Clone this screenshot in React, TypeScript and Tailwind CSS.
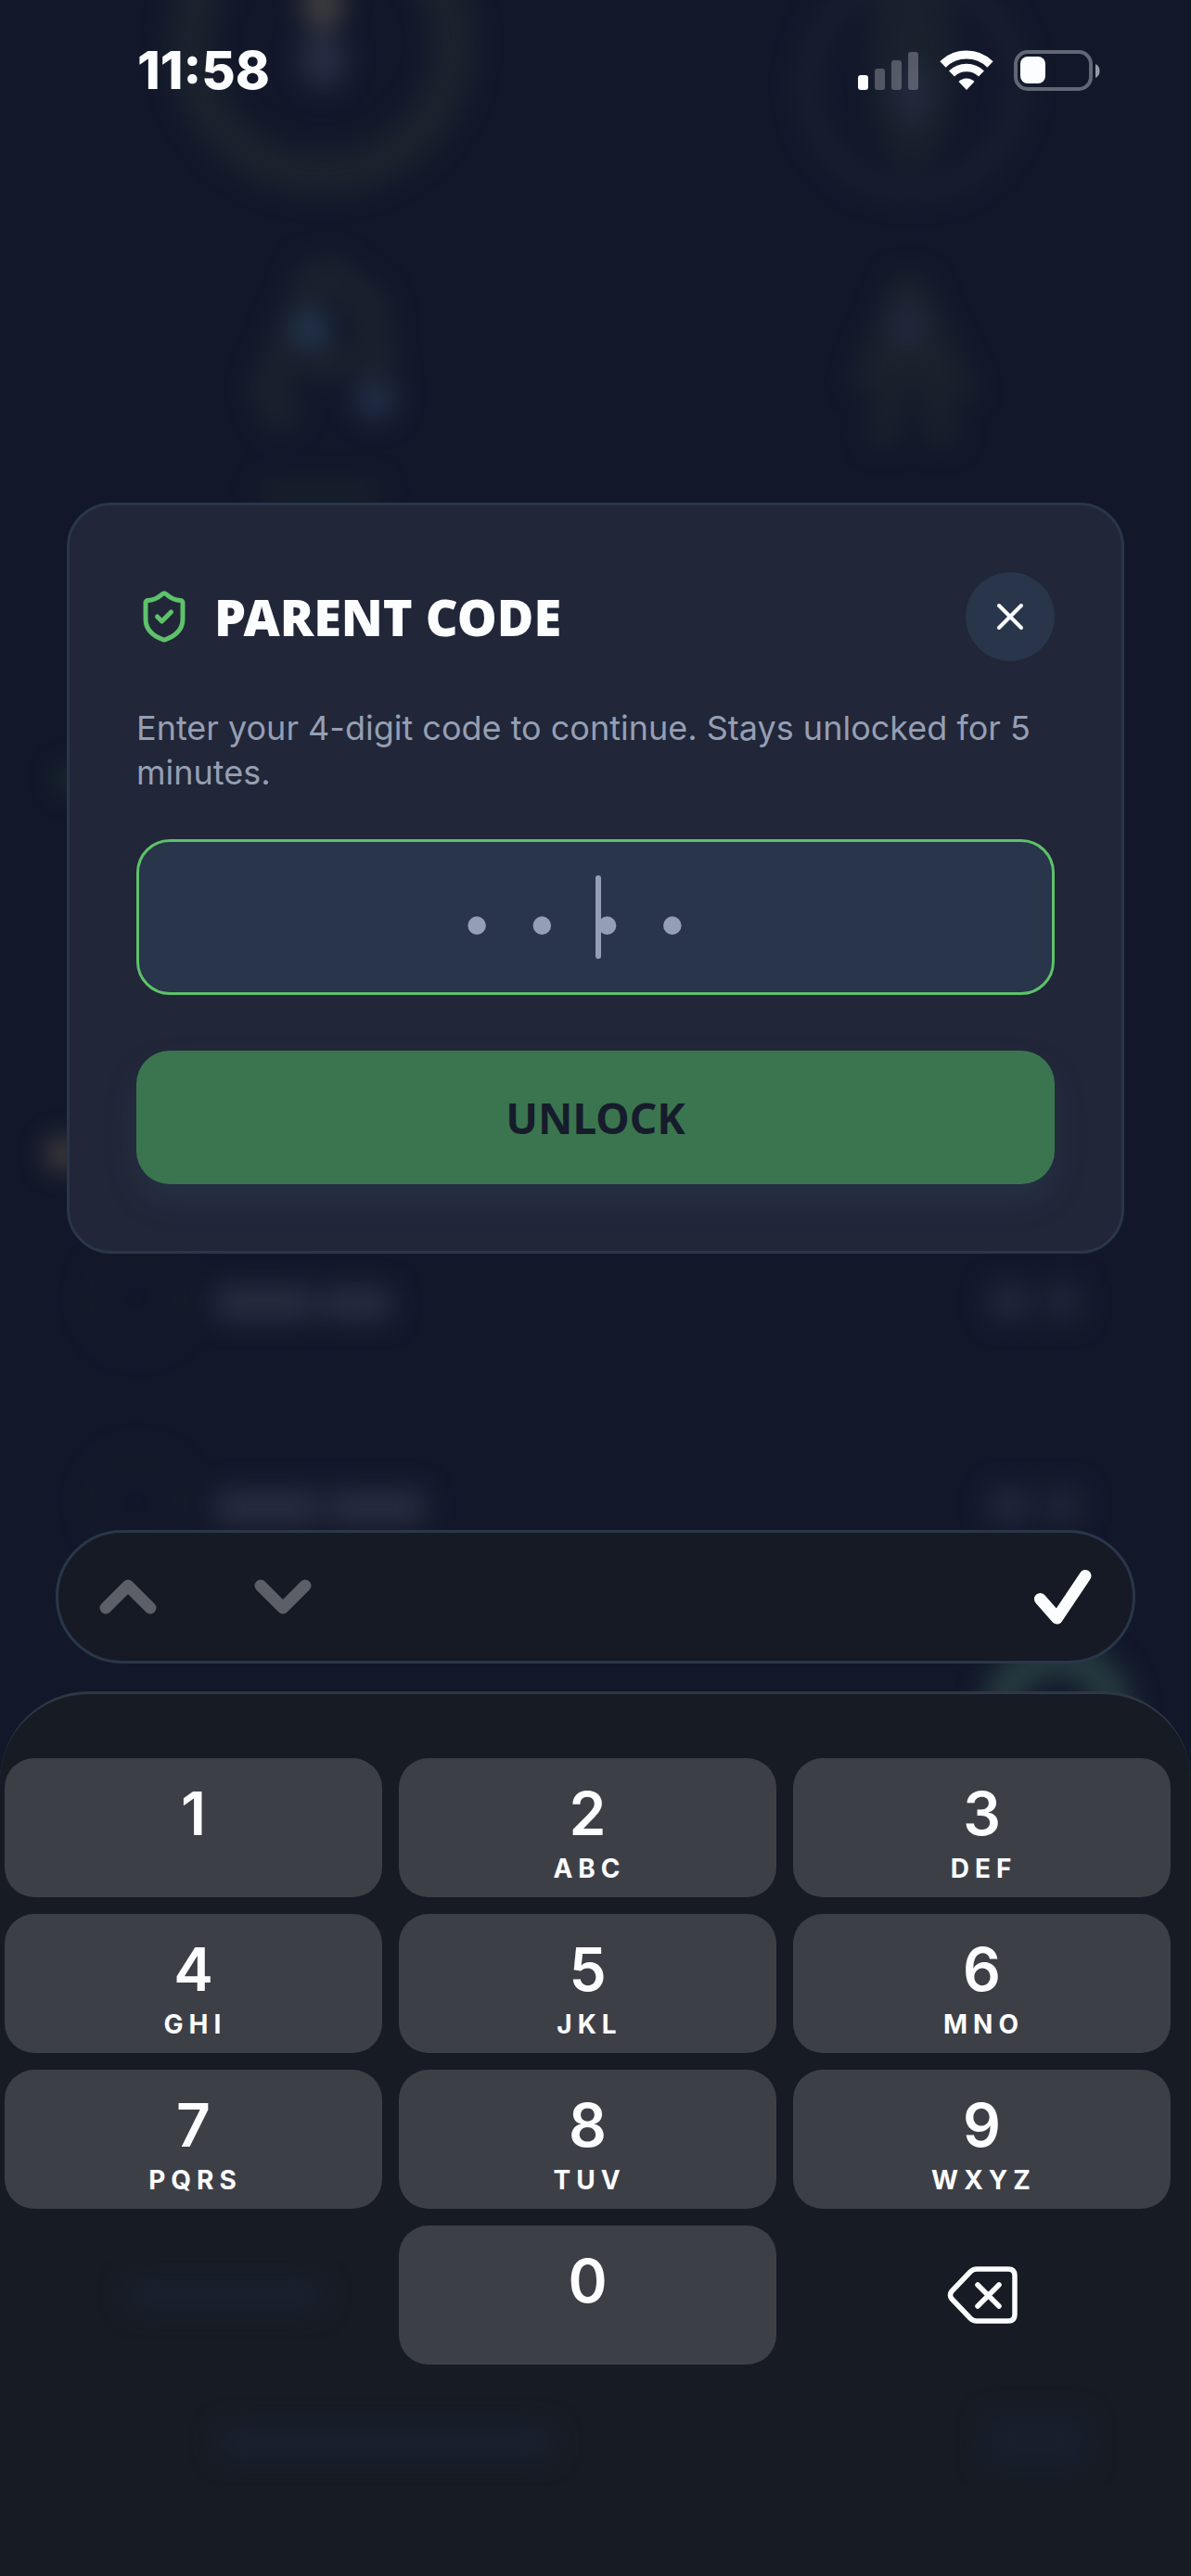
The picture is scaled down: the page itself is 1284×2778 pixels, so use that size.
import React, { useState } from 'react';
import { ShieldCheck, X } from 'lucide-react';

const keys = [
  { digit: '1', letters: '' },
  { digit: '2', letters: 'ABC' },
  { digit: '3', letters: 'DEF' },
  { digit: '4', letters: 'GHI' },
  { digit: '5', letters: 'JKL' },
  { digit: '6', letters: 'MNO' },
  { digit: '7', letters: 'PQRS' },
  { digit: '8', letters: 'TUV' },
  { digit: '9', letters: 'WXYZ' },
];

// Blurred remains of the screen under the dialog
const Backdrop: React.FC = () => (
  <div className="absolute inset-0 overflow-hidden" aria-hidden="true">
    <svg className="absolute inset-x-0 top-0 w-full" viewBox="0 0 1284 1900" fill="none">
      <defs>
        <filter id="soft" x="-10%" y="-10%" width="120%" height="120%" colorInterpolationFilters="sRGB">
          <feGaussianBlur stdDeviation="14" />
        </filter>
      </defs>
      <g filter="url(#soft)">
        <circle cx="347" cy="46" r="142" stroke="#1c232d" strokeWidth="44" />
        <ellipse cx="348" cy="4" rx="22" ry="28" fill="#403f40" />
        <ellipse cx="348" cy="64" rx="26" ry="32" fill="#262c42" />
        <circle cx="984" cy="92" r="114" stroke="#1a2132" strokeWidth="18" />
        <ellipse cx="984" cy="70" rx="44" ry="110" fill="#1a212d" />
        <ellipse cx="984" cy="100" rx="20" ry="30" fill="#222a3f" />
        <path d="M345 285 L290 420 L310 460 M345 285 L400 330 L410 440 M330 390 H380" stroke="#1b222e" strokeWidth="36" />
        <circle cx="335" cy="355" r="22" fill="#23334c" />
        <circle cx="404" cy="432" r="22" fill="#222e46" />
        <path d="M980 300 L930 420 M980 300 L1040 430 M980 340 L950 480 M980 340 L1020 480" stroke="#1b222c" strokeWidth="28" />
        <ellipse cx="978" cy="350" rx="20" ry="26" fill="#21283e" />
        <rect x="280" y="520" width="130" height="20" fill="#1a212c" />
        <circle cx="76" cy="840" r="14" fill="#1b2f30" />
        <circle cx="68" cy="1244" r="18" fill="#46413f" />
        <circle cx="148" cy="1400" r="48" stroke="#171d2a" strokeWidth="12" />
        <rect x="232" y="1386" width="106" height="38" fill="#272c3f" />
        <rect x="346" y="1388" width="76" height="36" fill="#272c3f" />
        <rect x="1066" y="1384" width="44" height="40" fill="#21273a" />
        <rect x="1126" y="1384" width="40" height="40" fill="#1f2537" />
        <circle cx="148" cy="1620" r="48" stroke="#171d2a" strokeWidth="12" />
        <rect x="232" y="1606" width="112" height="38" fill="#272c3f" />
        <rect x="354" y="1606" width="104" height="38" fill="#272c3f" />
        <rect x="1066" y="1604" width="44" height="40" fill="#21273a" />
        <rect x="1126" y="1604" width="40" height="40" fill="#1f2537" />
        <circle cx="1140" cy="1850" r="62" stroke="#263a3f" strokeWidth="40" />
      </g>
    </svg>
  </div>
);

const StatusBar: React.FC = () => (
  <header className="relative flex h-[152px] items-center justify-between pl-[148px] pr-[96px]">
    <span className="text-[56px] font-extrabold leading-[60px]">11:58</span>
    <div className="flex items-center gap-[22px]">
      <svg width="66" height="44" viewBox="0 0 66 44" fill="#fcfdff" role="img" aria-label="Signal">
        <rect x="0" y="27" width="11" height="16" rx="3" />
        <rect x="18" y="20" width="11" height="23" rx="3" opacity="0.26" />
        <rect x="36" y="11" width="11" height="32" rx="3" opacity="0.26" />
        <rect x="54" y="2" width="11" height="41" rx="3" opacity="0.26" />
      </svg>
      <svg width="58" height="44" viewBox="0 0 58 44" fill="none" stroke="#fcfdff" role="img" aria-label="Wi-Fi">
        <path d="M3.5 15.5 A36.5 36.5 0 0 1 54.5 15.5" strokeWidth="9" />
        <path d="M13 25.5 A23 23 0 0 1 45 25.5" strokeWidth="8.5" />
        <path d="M29 43 L20.5 34 A12 12 0 0 1 37.5 34 Z" fill="#fcfdff" stroke="none" />
      </svg>
      <svg width="95" height="44" viewBox="0 0 95 44" fill="none" role="img" aria-label="Battery">
        <rect x="2" y="2" width="81" height="40" rx="13" stroke="#626775" strokeWidth="4" />
        <rect x="7" y="7" width="27" height="29" rx="8" fill="#fcfdff" />
        <path d="M88 15 C94 17 94 28 88 30 Z" fill="#959aa8" />
      </svg>
    </div>
  </header>
);

export default function App() {
  const [code, setCode] = useState('');

  const press = (digit: string) => setCode((prev) => (prev + digit).slice(0, 4));

  return (
    <div className="relative flex min-h-screen flex-col bg-[#12182a] font-[Inter,sans-serif] text-[#fcfdff]">
      <Backdrop />
      <StatusBar />

      <main className="relative flex-1 px-[72px] pt-[390px]">
        <section
          role="dialog"
          aria-labelledby="parent-code-title"
          className="rounded-[48px] border-[3px] border-[#2a364a] bg-[#212638] p-[72px]"
        >
          <div className="flex items-center justify-between">
            <div className="flex items-center gap-6">
              <ShieldCheck size={60} color="#5ec269" />
              <h1 id="parent-code-title" className="font-['Noto_Sans',sans-serif] text-[54px] font-black leading-[60px]">
                PARENT CODE
              </h1>
            </div>
            <button aria-label="Close" className="flex size-24 items-center justify-center rounded-full bg-[#28354a]">
              <X size={48} />
            </button>
          </div>

          <label htmlFor="code" className="mt-12 block text-[36px] leading-[48px] text-[#959fb4]">
            Enter your 4-digit code to continue. Stays unlocked for 5 minutes.
          </label>

          <div className="relative mt-12">
            <input
              id="code"
              type="password"
              inputMode="numeric"
              maxLength={4}
              placeholder="••••"
              value={code}
              onChange={(e) => setCode(e.target.value)}
              className="block h-[168px] w-full rounded-[36px] border-[3px] border-[#5ec269] bg-[#28354a] pt-4 text-center font-['Liberation_Sans',sans-serif] text-[72px] tracking-[45px] caret-transparent outline-none placeholder:text-[#959fb4]"
            />
            {!code && (
              <span className="absolute left-1/2 top-1/2 h-[90px] w-[6px] -translate-y-1/2 rounded-full bg-[#959fb4]" />
            )}
          </div>

          <button className="mt-[60px] block h-[144px] w-full rounded-[36px] bg-[#3b754f] font-['Noto_Sans',sans-serif] text-[46px] font-bold text-[#161c2b] shadow-[0_18px_36px_rgba(59,100,120,0.2)]">
            UNLOCK
          </button>
        </section>
      </main>

      <div className="relative mx-[60px] mb-[30px] flex h-[144px] items-center justify-between rounded-[72px] border-[3px] border-[#2a364a] bg-[#161a24] px-11">
        <div className="flex gap-[105px]">
          <button aria-label="Previous field">
            <svg width="62" height="38" viewBox="0 0 62 38" fill="none" stroke="#5c5f68" strokeWidth="13" strokeLinecap="round" strokeLinejoin="round">
              <path d="M7 31 L31 7 L55 31" />
            </svg>
          </button>
          <button aria-label="Next field">
            <svg width="62" height="38" viewBox="0 0 62 38" fill="none" stroke="#5c5f68" strokeWidth="13" strokeLinecap="round" strokeLinejoin="round">
              <path d="M7 7 L31 31 L55 7" />
            </svg>
          </button>
        </div>
        <button aria-label="Done">
          <svg width="62" height="60" viewBox="0 0 62 60" fill="none" stroke="#fcfdff" strokeWidth="13" strokeLinecap="round" strokeLinejoin="round">
            <path d="M6.5 32.5 L24.5 53 L55 7.5" />
          </svg>
        </button>
      </div>

      <div className="relative rounded-t-[96px] border-t-[3px] border-[#2f3744] bg-[#171b24] pb-[228px] pl-[5px] pr-[22px] pt-[69px]">
        <svg className="absolute inset-x-0 bottom-0 w-full" viewBox="0 0 1284 378" fill="#1a2130" aria-hidden="true">
          <g filter="url(#soft)">
            <rect x="138" y="58" width="208" height="32" />
            <rect x="236" y="218" width="360" height="32" />
            <rect x="1062" y="206" width="110" height="54" fill="#181f2e" />
          </g>
        </svg>
        <div className="relative grid grid-cols-3 gap-[18px]">
          {keys.map((key) => (
            <button
              key={key.digit}
              onClick={() => press(key.digit)}
              className="flex h-[150px] flex-col items-center rounded-[32px] bg-[#3d3f47] pt-6"
            >
              <span className="text-[64px] font-semibold leading-[72px]">{key.digit}</span>
              <span className="pl-1 text-[28px] font-bold leading-[46px] tracking-[6px]">{key.letters}</span>
            </button>
          ))}
          <button
            onClick={() => press('0')}
            className="col-start-2 flex h-[150px] flex-col items-center rounded-[32px] bg-[#3d3f47] pt-6"
          >
            <span className="text-[64px] font-semibold leading-[72px]">0</span>
          </button>
          <button
            aria-label="Delete"
            onClick={() => setCode(code.slice(0, -1))}
            className="flex h-[150px] items-center justify-center"
          >
            <svg width="76" height="62" viewBox="0 0 76 62" fill="none" stroke="#fcfdff" strokeWidth="5.5" strokeLinecap="round" strokeLinejoin="round">
              <path d="M32 3 H66 Q73 3 73 10 V52 Q73 59 66 59 H32 Q28 59 25 56 L5 35 Q2 31 5 27 L25 6 Q28 3 32 3 Z" />
              <path d="M33 20 L56 43 M56 20 L33 43" />
            </svg>
          </button>
        </div>
      </div>
    </div>
  );
}
